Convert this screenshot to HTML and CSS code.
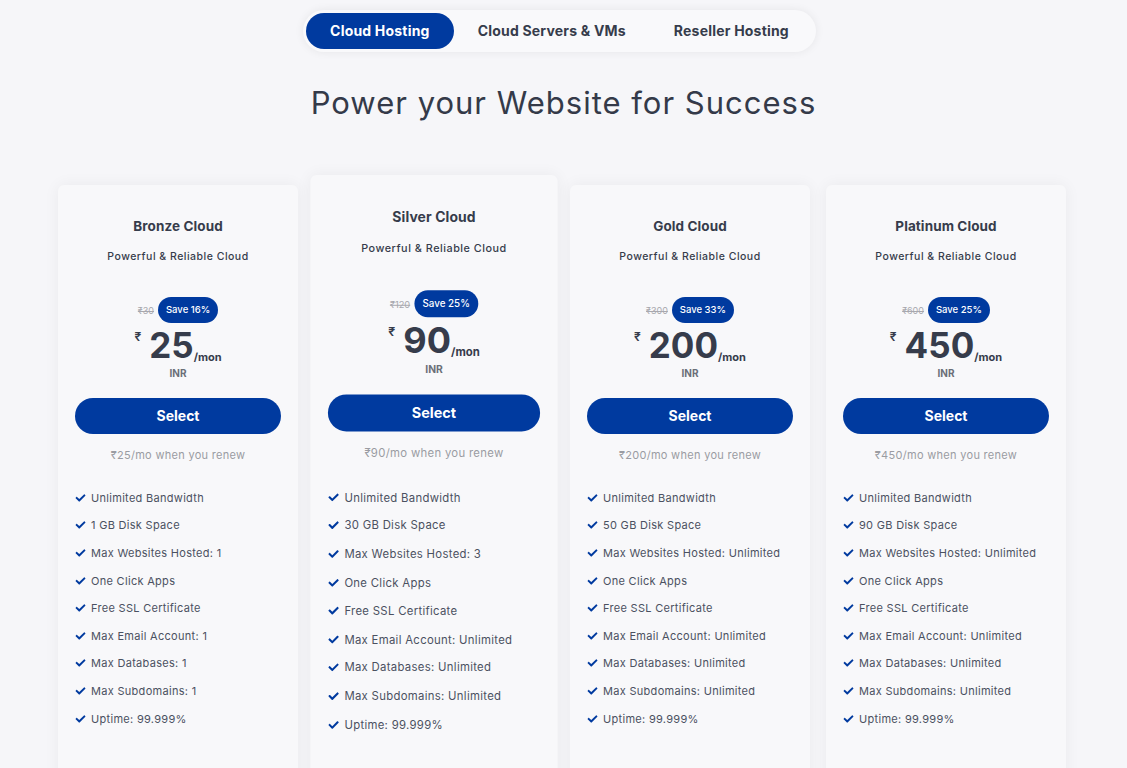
FILE: index.html
```html
<!DOCTYPE html>
<html lang="en">
<head>
<meta charset="utf-8">
<title>Pricing</title>
<link rel="stylesheet" href="styles.css">
</head>
<body>
<div class="tabs-wrap">
  <nav class="tabs">
    <a class="tab active">Cloud Hosting</a>
    <a class="tab">Cloud Servers &amp; VMs</a>
    <a class="tab">Reseller Hosting</a>
  </nav>
</div>
<h1 class="headline">Power your Website for Success</h1>

<svg width="0" height="0" style="position:absolute">
  <defs>
    <symbol id="chk" viewBox="0 0 512 512"><path d="M173.898 439.404l-166.4-166.4c-9.997-9.997-9.997-26.206 0-36.204l36.203-36.204c9.997-9.998 26.207-9.998 36.204 0L192 312.69 432.095 72.596c9.997-9.997 26.207-9.997 36.204 0l36.203 36.204c9.997 9.997 9.997 26.206 0 36.204l-294.4 294.401c-9.998 9.997-26.207 9.997-36.204-.001z"/></symbol>
  </defs>
</svg>

<section class="plans">
  <div class="col">
    <div class="card">
      <h3 class="plan-name">Bronze Cloud</h3>
      <p class="plan-sub">Powerful &amp; Reliable Cloud</p>
      <div class="save-row"><s class="old">₹30</s><span class="badge">Save 16%</span></div>
      <div class="price"><span class="cur">₹</span><span class="amt">25</span><span class="per">/mon</span></div>
      <div class="inr">INR</div>
      <a class="btn">Select</a>
      <p class="renew">₹25/mo when you renew</p>
      <ul class="features">
        <li><svg class="ic"><use href="#chk"/></svg>Unlimited Bandwidth</li>
        <li><svg class="ic"><use href="#chk"/></svg>1 GB Disk Space</li>
        <li><svg class="ic"><use href="#chk"/></svg>Max Websites Hosted: 1</li>
        <li><svg class="ic"><use href="#chk"/></svg>One Click Apps</li>
        <li><svg class="ic"><use href="#chk"/></svg>Free SSL Certificate</li>
        <li><svg class="ic"><use href="#chk"/></svg>Max Email Account: 1</li>
        <li><svg class="ic"><use href="#chk"/></svg>Max Databases: 1</li>
        <li><svg class="ic"><use href="#chk"/></svg>Max Subdomains: 1</li>
        <li><svg class="ic"><use href="#chk"/></svg>Uptime: 99.999%</li>
      </ul>
    </div>
  </div>
  <div class="col">
    <div class="card featured">
      <h3 class="plan-name">Silver Cloud</h3>
      <p class="plan-sub">Powerful &amp; Reliable Cloud</p>
      <div class="save-row"><s class="old">₹120</s><span class="badge">Save 25%</span></div>
      <div class="price"><span class="cur">₹</span><span class="amt">90</span><span class="per">/mon</span></div>
      <div class="inr">INR</div>
      <a class="btn">Select</a>
      <p class="renew">₹90/mo when you renew</p>
      <ul class="features">
        <li><svg class="ic"><use href="#chk"/></svg>Unlimited Bandwidth</li>
        <li><svg class="ic"><use href="#chk"/></svg>30 GB Disk Space</li>
        <li><svg class="ic"><use href="#chk"/></svg>Max Websites Hosted: 3</li>
        <li><svg class="ic"><use href="#chk"/></svg>One Click Apps</li>
        <li><svg class="ic"><use href="#chk"/></svg>Free SSL Certificate</li>
        <li><svg class="ic"><use href="#chk"/></svg>Max Email Account: Unlimited</li>
        <li><svg class="ic"><use href="#chk"/></svg>Max Databases: Unlimited</li>
        <li><svg class="ic"><use href="#chk"/></svg>Max Subdomains: Unlimited</li>
        <li><svg class="ic"><use href="#chk"/></svg>Uptime: 99.999%</li>
      </ul>
    </div>
  </div>
  <div class="col">
    <div class="card">
      <h3 class="plan-name">Gold Cloud</h3>
      <p class="plan-sub">Powerful &amp; Reliable Cloud</p>
      <div class="save-row"><s class="old">₹300</s><span class="badge">Save 33%</span></div>
      <div class="price"><span class="cur">₹</span><span class="amt">200</span><span class="per">/mon</span></div>
      <div class="inr">INR</div>
      <a class="btn">Select</a>
      <p class="renew">₹200/mo when you renew</p>
      <ul class="features">
        <li><svg class="ic"><use href="#chk"/></svg>Unlimited Bandwidth</li>
        <li><svg class="ic"><use href="#chk"/></svg>50 GB Disk Space</li>
        <li><svg class="ic"><use href="#chk"/></svg>Max Websites Hosted: Unlimited</li>
        <li><svg class="ic"><use href="#chk"/></svg>One Click Apps</li>
        <li><svg class="ic"><use href="#chk"/></svg>Free SSL Certificate</li>
        <li><svg class="ic"><use href="#chk"/></svg>Max Email Account: Unlimited</li>
        <li><svg class="ic"><use href="#chk"/></svg>Max Databases: Unlimited</li>
        <li><svg class="ic"><use href="#chk"/></svg>Max Subdomains: Unlimited</li>
        <li><svg class="ic"><use href="#chk"/></svg>Uptime: 99.999%</li>
      </ul>
    </div>
  </div>
  <div class="col">
    <div class="card">
      <h3 class="plan-name">Platinum Cloud</h3>
      <p class="plan-sub">Powerful &amp; Reliable Cloud</p>
      <div class="save-row"><s class="old">₹600</s><span class="badge">Save 25%</span></div>
      <div class="price"><span class="cur">₹</span><span class="amt">450</span><span class="per">/mon</span></div>
      <div class="inr">INR</div>
      <a class="btn">Select</a>
      <p class="renew">₹450/mo when you renew</p>
      <ul class="features">
        <li><svg class="ic"><use href="#chk"/></svg>Unlimited Bandwidth</li>
        <li><svg class="ic"><use href="#chk"/></svg>90 GB Disk Space</li>
        <li><svg class="ic"><use href="#chk"/></svg>Max Websites Hosted: Unlimited</li>
        <li><svg class="ic"><use href="#chk"/></svg>One Click Apps</li>
        <li><svg class="ic"><use href="#chk"/></svg>Free SSL Certificate</li>
        <li><svg class="ic"><use href="#chk"/></svg>Max Email Account: Unlimited</li>
        <li><svg class="ic"><use href="#chk"/></svg>Max Databases: Unlimited</li>
        <li><svg class="ic"><use href="#chk"/></svg>Max Subdomains: Unlimited</li>
        <li><svg class="ic"><use href="#chk"/></svg>Uptime: 99.999%</li>
      </ul>
    </div>
  </div>
</section>
</body>
</html>
```

FILE: styles.css
```css
* { box-sizing: border-box; }
html, body {
  margin: 0;
  padding: 0;
  background: #f6f6f9;
  font-family: "Inter", "Noto Sans", "Liberation Sans", sans-serif;
  color: #363c4b;
  overflow: hidden;
}
.tabs-wrap {
  display: flex;
  justify-content: center;
  padding-top: 10px;
}
.tabs {
  display: flex;
  padding: 3px;
  background: #f9f9fb;
  border-radius: 22px;
  box-shadow: 0 0 10px rgba(0, 0, 0, 0.07);
  margin-left: -8px;
}
.tab {
  display: block;
  height: 36px;
  line-height: 36px;
  padding: 0 24px;
  border-radius: 18px;
  font-size: 14px;
  font-weight: 700;
  color: #363c4b;
  letter-spacing: 0.2px;
}
.tab.active {
  background: #003a9f;
  color: #fff;
}
.headline {
  margin: 32px 0 0;
  text-align: center;
  font-size: 31px;
  line-height: 38px;
  font-weight: 400;
  color: #343a49;
  letter-spacing: 1px;
}
.plans {
  display: grid;
  grid-template-columns: repeat(4, 256px);
  padding: 0 0 0 50px;
  margin-top: 63px;
}
.col {
  padding: 0 8px;
}
.card {
  background: #f8f8fa;
  border-radius: 6px;
  box-shadow: 0 0 16px rgba(0, 0, 0, 0.055);
  padding: 32px 17px 60px;
  text-align: center;
  height: 640px;
}
.card.featured {
  transform: scale(1.03);
  transform-origin: 50% 333px;
  position: relative;
  z-index: 1;
}
.plan-name {
  margin: 0;
  font-size: 13.5px;
  line-height: 18px;
  font-weight: 700;
  color: #363c4b;
  letter-spacing: 0.1px;
}
.plan-sub {
  margin: 15px 0 0;
  font-size: 10.5px;
  line-height: 14px;
  font-weight: 500;
  color: #363c4b;
  letter-spacing: 0.5px;
}
.save-row {
  display: flex;
  justify-content: center;
  align-items: center;
  gap: 4px;
  margin-top: 33px;
}
.old {
  font-size: 9px;
  color: #a8a8ae;
}
.badge {
  display: inline-block;
  height: 26px;
  line-height: 26px;
  padding: 0 8px;
  border-radius: 13px;
  background: #003a9f;
  color: #fff;
  font-size: 9.5px;
  font-weight: 500;
}
.price {
  display: flex;
  justify-content: center;
  align-items: flex-start;
  margin-top: 2px;
  height: 40px;
}
.cur {
  font-size: 12px;
  font-weight: 600;
  line-height: 14px;
  margin-top: 5px;
  margin-right: 8px;
}
.amt {
  font-size: 35px;
  line-height: 40px;
  font-weight: 700;
  color: #363c4b;
}
.per {
  align-self: flex-end;
  font-size: 11px;
  font-weight: 700;
  line-height: 12px;
  margin-bottom: 2px;
}
.inr {
  font-size: 10px;
  font-weight: 700;
  color: #6b6f78;
  line-height: 12px;
  margin-top: 2px;
}
.btn {
  display: block;
  margin-top: 19px;
  height: 36px;
  line-height: 36px;
  border-radius: 18px;
  background: #003a9f;
  color: #fff;
  font-size: 14px;
  font-weight: 700;
}
.renew {
  margin: 14px 0 0;
  font-size: 11px;
  line-height: 14px;
  color: #9a9ca2;
  letter-spacing: 0.3px;
}
.features {
  list-style: none;
  margin: 22px 0 0;
  padding: 0;
  text-align: left;
}
.features li {
  display: flex;
  align-items: center;
  height: 27.6px;
  font-size: 11px;
  color: #4b5161;
  letter-spacing: 0.3px;
}
.ic {
  width: 11px;
  height: 10px;
  fill: #003a9f;
  margin-right: 5px;
  flex: none;
}
```
